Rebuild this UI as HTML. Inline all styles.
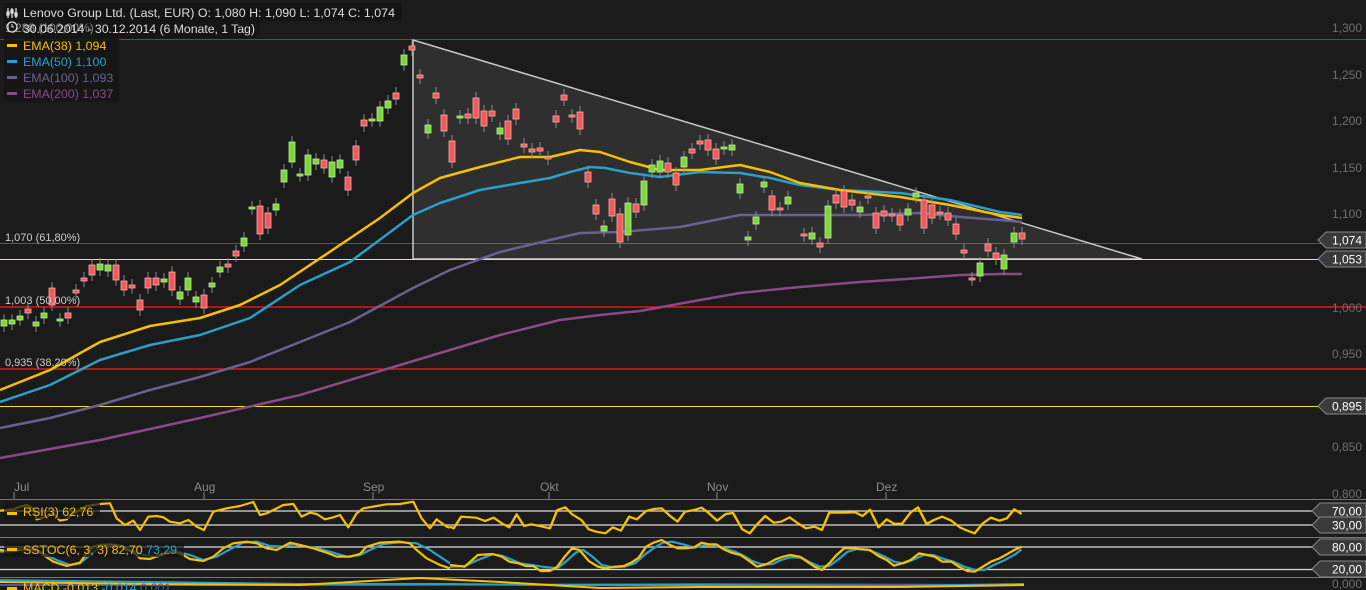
<!DOCTYPE html>
<html><head><meta charset="utf-8"><style>
html,body{margin:0;padding:0;background:#1c1b1b;width:1366px;height:590px;overflow:hidden}
svg{display:block;font-family:"Liberation Sans",sans-serif}
</style></head><body>
<svg id="s" width="1366" height="590" viewBox="0 0 1366 590" xmlns="http://www.w3.org/2000/svg">
<rect width="1366" height="590" fill="#1c1b1b"/>
<line x1="0" y1="39.5" x2="1366" y2="39.5" stroke="#d01818" stroke-width="1"/>
<line x1="0" y1="243.5" x2="1366" y2="243.5" stroke="#555" stroke-width="1"/>
<line x1="0" y1="307" x2="1366" y2="307" stroke="#ff1a1a" stroke-width="1.3"/>
<line x1="0" y1="369" x2="1366" y2="369" stroke="#ff1a1a" stroke-width="1.3"/>
<line x1="0" y1="406.5" x2="1366" y2="406.5" stroke="#f0e020" stroke-width="1"/>
<polygon points="413,40 1142,259 413,259" fill="rgba(255,255,255,0.09)" stroke="#c8c8c8" stroke-width="1.5"/>
<line x1="0" y1="259.5" x2="1366" y2="259.5" stroke="#e8e0a0" stroke-width="1"/>
<g id="ema" fill="none" stroke-width="2.5" stroke-linejoin="round">
<polyline stroke="#8a4a88" points="0,458 100,440 200,418 300,395 400,365 450,350 500,335 560,320 600,315 640,311 700,300 740,293 800,287 860,282 920,278 960,275 1000,274 1022,274"/>
<polyline stroke="#6a6090" points="0,428 50,418 100,405 150,390 200,377 250,362 300,342 350,322 413,288 450,270 500,252 550,240 580,233 620,232 680,227 740,215 800,215 860,215 920,213 960,217 1000,220 1022,222"/>
<polyline stroke="#2a9fc8" points="0,402 50,385 100,360 150,345 200,335 250,318 300,285 350,262 413,215 440,203 480,190 520,183 550,178 570,172 590,167 605,168 630,173 660,177 700,172 740,173 770,178 800,185 840,190 900,193 950,200 1000,212 1022,215"/>
<polyline stroke="#f5c000" points="0,390 50,370 100,342 150,326 200,318 240,305 280,285 340,245 380,218 413,193 440,178 480,167 520,157 550,157 580,150 600,152 630,162 660,170 700,170 740,165 770,172 800,183 840,190 900,197 950,205 1000,215 1022,218"/>
</g>
<g id="candles"></g>
<g stroke="#888" stroke-width="1">
<line x1="14" y1="492" x2="14" y2="499"/><line x1="204" y1="492" x2="204" y2="499"/><line x1="373" y1="492" x2="373" y2="499"/><line x1="549" y1="492" x2="549" y2="499"/><line x1="717" y1="492" x2="717" y2="499"/><line x1="886" y1="492" x2="886" y2="499"/>
</g>
<g fill="#8a8a8a" font-size="12">
<text x="14" y="491">Jul</text><text x="194" y="491">Aug</text><text x="363" y="491">Sep</text><text x="540" y="491">Okt</text><text x="707" y="491">Nov</text><text x="876" y="491">Dez</text>
</g>
<g fill="#6e6e6e" font-size="12" text-anchor="end">
<text x="1362" y="32">1,300</text><text x="1362" y="79">1,250</text><text x="1362" y="125">1,200</text><text x="1362" y="172">1,150</text><text x="1362" y="218">1,100</text><text x="1362" y="312">1,000</text><text x="1362" y="358">0,950</text><text x="1362" y="451">0,850</text><text x="1362" y="498">0,800</text><text x="1362" y="588">0,000</text>
</g>
<line x1="0" y1="499.5" x2="1366" y2="499.5" stroke="#777"/>
<line x1="0" y1="537.5" x2="1366" y2="537.5" stroke="#777"/>
<line x1="0" y1="577.5" x2="1366" y2="577.5" stroke="#777"/>
<g stroke="#ddd" stroke-width="1.3">
<line x1="0" y1="511" x2="1320" y2="511"/><line x1="0" y1="525" x2="1320" y2="525"/>
<line x1="0" y1="547" x2="1320" y2="547"/><line x1="0" y1="569.5" x2="1320" y2="569.5"/>
</g>
<g fill="none" stroke-linejoin="round" stroke-width="2.2">
<g>
<polyline stroke="#2a9fc8" transform="translate(0,480) scale(0.3333)" stroke-width="6.6" points="0,215 40,213 90,208 130,220 170,240 210,255 240,250 270,225 300,200 330,195 360,200 400,213 430,225 470,230 500,220 530,215 570,225 610,240 650,230 690,208 730,188 770,185 810,198 850,200 880,193 920,200 960,207 1000,218 1040,230 1080,225 1110,210 1150,192 1200,187 1250,190 1290,210 1320,230 1350,250"/>
<polyline stroke="#f5c000" transform="translate(0,480) scale(0.3333)" stroke-width="6.6" points="0,210 30,213 70,208 110,208 130,225 160,245 200,258 240,248 260,220 280,200 300,195 330,193 360,197 380,210 400,215 420,235 450,237 480,225 510,215 540,220 570,237 610,243 640,230 670,205 700,190 740,185 770,190 800,205 830,210 870,188 900,195 940,205 980,218 1010,230 1050,230 1080,222 1100,200 1140,188 1200,185 1230,190 1250,210 1280,235 1320,255 1350,265"/>
<polyline stroke="#f5c000" transform="translate(0,480) scale(0.3333)" stroke-width="6.6" points="0,92 40,88 60,80 80,75 100,85 110,118 140,110 160,100 180,122 200,118 220,100 240,90 260,78 300,72 330,70 350,115 375,135 400,122 420,150 445,110 470,108 490,112 510,125 540,130 565,120 590,140 612,150 640,95 680,85 720,78 760,66 780,105 800,100 830,85 850,75 880,72 905,110 930,98 950,102 975,118 1000,112 1020,105 1045,142 1070,100 1090,85 1130,78 1160,73 1200,72 1240,65 1265,115 1290,145 1310,118 1340,140 1350,143"/>
</g>
<g transform="translate(450,495) scale(0.37,0.3333)">
<polyline stroke="#2a9fc8" stroke-width="6.6" points="0,215 40,213 75,195 115,178 140,182 165,193 190,205 220,210 250,215 290,220 315,198 340,173 360,165 385,185 410,210 440,217 470,215 500,205 525,180 550,160 575,143 600,140 630,148 660,158 690,150 710,150 740,160 770,170 795,183 815,197 840,207 870,208 895,195 920,187 950,188 975,203 1000,215 1025,213 1050,193 1075,170 1100,162 1125,163 1150,173 1175,185 1200,200 1225,205 1250,195 1280,180 1305,180 1330,190 1360,200 1390,215 1420,225 1445,225 1470,210 1500,195 1525,180 1545,163"/>
<polyline stroke="#f5c000" stroke-width="6.6" points="0,210 40,215 75,180 115,177 140,185 160,200 185,205 205,213 225,213 245,228 270,228 290,215 310,185 330,160 350,165 375,198 400,215 420,220 445,215 470,213 490,203 510,188 530,155 550,143 572,135 595,150 615,160 640,160 660,157 680,143 700,148 720,148 740,163 760,173 785,180 805,195 830,215 855,208 880,193 900,185 920,180 945,185 965,200 985,215 1005,225 1025,205 1045,180 1065,160 1090,160 1110,163 1135,165 1158,183 1180,195 1200,212 1222,205 1245,195 1268,175 1290,180 1310,185 1330,200 1355,200 1375,215 1398,228 1418,230 1440,215 1462,200 1485,190 1505,178 1525,165 1545,155"/>
<polyline stroke="#f5c000" stroke-width="6.6" points="0,95 10,100 30,65 70,68 95,78 118,68 140,85 160,97 180,58 200,93 220,88 250,95 270,100 290,45 312,37 330,58 355,75 375,103 395,110 420,115 440,97 462,107 484,65 505,73 530,48 550,42 572,40 595,63 615,80 635,50 660,45 680,38 700,55 722,77 745,57 765,54 790,103 810,115 830,88 852,63 875,83 895,80 918,67 940,85 962,100 985,95 1005,105 1025,53 1070,53 1095,52 1115,63 1135,44 1158,97 1180,73 1200,86 1222,86 1245,52 1265,37 1288,87 1308,75 1330,65 1355,77 1378,97 1398,107 1418,115 1440,85 1462,68 1485,77 1505,70 1525,43 1545,57"/>
</g>
<polyline stroke="#5050b0" stroke-width="2" points="0,585 400,585 700,584 1024,585"/>
<polyline stroke="#2a9fc8" stroke-width="2" points="0,580 150,582 300,584 450,584 550,585 700,585 900,586 1024,584"/>
<polyline stroke="#f5c000" stroke-width="2" points="0,582 150,584 300,585 420,578 500,582 600,588 700,587 900,587 1024,585"/>
</g>
<g font-size="12.4">
<rect x="4" y="3" width="398" height="18" fill="#141414"/>
<rect x="4" y="21" width="256" height="17" fill="#141414" opacity="0.8"/>
<text x="5" y="32" fill="#888" font-size="12">1,288 (100,00%)</text>
<g stroke="#ddd" stroke-width="1.3" fill="none"><line x1="8" y1="8" x2="8" y2="18"/><line x1="12" y1="8" x2="12" y2="18"/><line x1="16" y1="8" x2="16" y2="18"/><rect x="7" y="12" width="2" height="3" fill="#ddd"/><rect x="11" y="10" width="2" height="3" fill="#ddd"/><rect x="15" y="13" width="2" height="3" fill="#ddd"/></g>
<text x="23" y="17" fill="#ddd" textLength="372">Lenovo Group Ltd. (Last, EUR)  O: 1,080  H: 1,090  L: 1,074  C: 1,074</text>
<circle cx="12" cy="27" r="5" fill="none" stroke="#ddd" stroke-width="1.3"/><path d="M12 24v3h2" stroke="#ddd" fill="none"/>
<text x="23" y="33" fill="#ddd" textLength="232">30.06.2014 - 30.12.2014 (6 Monate, 1 Tag)</text>
<rect x="4" y="38" width="115" height="64" fill="#161616" opacity="0.9"/>
<rect x="7" y="44" width="10" height="3" fill="#f5c000"/><text x="23" y="50" fill="#f5c000">EMA(38)  1,094</text>
<rect x="7" y="60" width="10" height="3" fill="#2a9fc8"/><text x="23" y="66" fill="#2a9fc8">EMA(50)  1,100</text>
<rect x="7" y="76" width="10" height="3" fill="#6a6090"/><text x="23" y="82" fill="#6a6090">EMA(100)  1,093</text>
<rect x="7" y="92" width="10" height="3" fill="#8a4a88"/><text x="23" y="98" fill="#8a4a88">EMA(200)  1,037</text>
<text x="5" y="241" fill="#ccc" font-size="11">1,070 (61,80%)</text>
<text x="5" y="304" fill="#ccc" font-size="11">1,003 (50,00%)</text>
<text x="5" y="366" fill="#ccc" font-size="11">0,935 (38,20%)</text>
<rect x="4" y="503" width="96" height="16" fill="#141414" opacity="0.7"/>
<rect x="7" y="512" width="10" height="3" fill="#f5c000"/><text x="23" y="516" fill="#f5c000">RSI(3)  62,76</text>
<rect x="4" y="541" width="180" height="16" fill="#141414" opacity="0.7"/>
<rect x="7" y="548" width="10" height="3" fill="#f5c000"/><text x="23" y="554" fill="#f5c000">SSTOC(6, 3, 3)  82,70  <tspan fill="#2a9fc8">73,29</tspan></text>
<rect x="7" y="587" width="10" height="3" fill="#f5c000"/><text x="23" y="592" fill="#f5c000">MACD  -0,013  <tspan fill="#2a9fc8">-0,014</tspan>  <tspan fill="#5050b0">0,001</tspan></text>
</g>
<g id="tags" font-size="12" fill="#fff"></g>
</svg>
<script>
var NS="http://www.w3.org/2000/svg",cg=document.getElementById("candles");
function el(t,a,p){var e=document.createElementNS(NS,t);for(var k in a)e.setAttribute(k,a[k]);p.appendChild(e);return e;}
var C=[[4,320,326,'g'],[12,320,324,'g'],[20,316,320,'g'],[28,309,313,'r'],[36,322,326,'g'],[44,313,318,'g'],[52,288,305,'r'],[60,319,321,'g'],[68,313,318,'r'],[76,290,293,'r'],[84,278,281,'r'],[92,265,275,'r'],[100,264,270,'g'],[108,265,271,'g'],[116,265,280,'r'],[124,281,290,'r'],[132,285,288,'r'],[140,300,310,'r'],[148,278,288,'r'],[156,278,285,'r'],[164,279,282,'g'],[172,272,290,'r'],[180,292,299,'g'],[188,278,290,'g'],[196,297,302,'g'],[204,295,308,'r'],[212,283,287,'g'],[220,267,272,'g'],[228,264,267,'r'],[236,251,256,'r'],[244,238,246,'g'],[252,207,209,'g'],[260,206,234,'r'],[268,213,228,'r'],[276,204,210,'g'],[284,170,182,'g'],[292,142,162,'g'],[300,174,176,'g'],[308,155,175,'g'],[316,159,164,'g'],[324,160,168,'r'],[332,162,177,'g'],[340,160,168,'g'],[348,177,190,'r'],[356,146,160,'r'],[364,120,126,'r'],[372,119,121,'g'],[380,107,121,'g'],[388,101,108,'g'],[396,93,99,'r'],[404,55,65,'g'],[412,46,50,'r'],[420,75,78,'r'],[428,125,133,'g'],[436,93,98,'r'],[444,115,131,'r'],[452,141,162,'r'],[460,116,118,'g'],[468,114,118,'r'],[476,98,118,'r'],[484,111,126,'r'],[492,111,116,'r'],[500,128,134,'g'],[508,121,139,'r'],[516,109,119,'r'],[524,144,147,'r'],[532,149,152,'r'],[540,148,151,'r'],[548,157,159,'r'],[556,116,122,'r'],[564,95,100,'r'],[572,115,117,'r'],[580,112,129,'r'],[588,172,182,'r'],[596,205,214,'r'],[604,226,231,'g'],[612,199,216,'r'],[620,214,242,'r'],[628,203,235,'g'],[636,204,212,'r'],[644,181,205,'g'],[652,165,172,'g'],[660,161,172,'g'],[668,163,172,'r'],[676,173,185,'r'],[684,157,167,'g'],[692,149,153,'r'],[700,141,144,'r'],[708,140,150,'r'],[716,149,159,'r'],[724,147,149,'g'],[732,145,150,'g'],[740,184,193,'g'],[748,237,240,'g'],[756,217,224,'g'],[764,182,187,'g'],[772,196,210,'r'],[780,208,210,'r'],[788,197,204,'g'],[804,234,236,'r'],[812,233,239,'g'],[820,243,247,'r'],[828,206,238,'g'],[836,195,203,'r'],[844,191,207,'r'],[852,200,205,'r'],[860,207,212,'g'],[868,196,198,'r'],[876,213,228,'r'],[884,211,216,'r'],[892,214,216,'r'],[900,215,225,'r'],[908,209,215,'g'],[916,193,197,'g'],[924,200,228,'r'],[932,205,218,'r'],[940,212,214,'r'],[948,213,220,'r'],[956,224,234,'r'],[964,250,253,'r'],[972,278,280,'r'],[980,263,276,'g'],[988,244,251,'r'],[996,253,259,'r'],[1004,255,269,'g'],[1014,233,242,'g'],[1022,233,239,'r']];
C.forEach(function(c){var x=c[0],a=c[1],b=c[2],g=c[3]=='g';
el('line',{x1:x,x2:x,y1:a-6,y2:b+6,stroke:'#8a8a8a','stroke-width':1},cg);
el('rect',{x:x-3,y:a,width:6,height:Math.max(2,b-a),fill:g?'#7fd63f':'#f05a5a',stroke:g?'#b8f090':'#ffaaaa','stroke-width':0.8},cg);});
var tg=document.getElementById("tags");
[[240,'1,074',1318],[259,'1,053',1318],[406,'0,895',1318],[511,'70,00',1312],[525,'30,00',1312],[547,'80,00',1312],[569,'20,00',1312]].forEach(function(t){var y=t[0],x=t[2];
el('polygon',{points:(x)+','+y+' '+(x+8)+','+(y-8)+' 1366,'+(y-8)+' 1366,'+(y+8)+' '+(x+8)+','+(y+8),fill:'#3a3a3a',stroke:'#888','stroke-width':1},tg);
var e=el('text',{x:1362,y:y+4.5,'text-anchor':'end'},tg);e.textContent=t[1];});
</script>
</body></html>
